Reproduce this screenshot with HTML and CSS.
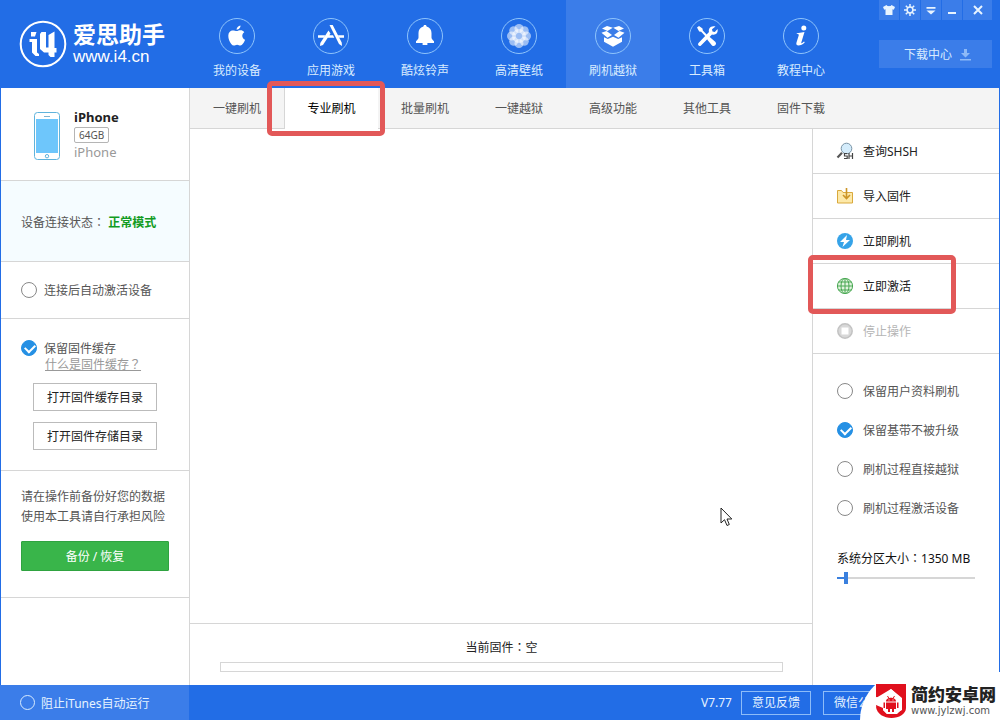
FILE: index.html
```html
<!DOCTYPE html>
<html lang="zh-CN">
<head>
<meta charset="utf-8">
<meta name="viewport" content="width=device-width, initial-scale=1">
<title>爱思助手</title>
<link rel="stylesheet" href="styles.css">
</head>
<body>
<div class="app">
  <header class="header">
    <div class="brand">
      <svg class="brand-mark" viewBox="0 0 48 48" aria-hidden="true">
        <circle cx="24" cy="24" r="22.3" fill="none" stroke="#fff" stroke-width="2"/>
        <path fill="#fff" d="M12 12h5.500l-1.500 4.500h-4zM10.500 19H18v13.500l2 1.500v2h-3.500L13 32.500V22h-2.500zM22.500 12H27v15.500h2.500V15l6-3.500V28h2v4.500h-2V37h-4l-2-2v-2.500H25L21 29V14z"/>
      </svg>
      <div class="brand-words">
        <span class="brand-name">爱思助手</span>
        <span class="brand-url">www.i4.cn</span>
      </div>
    </div>
    <nav class="nav">
      <a class="nav-item" href="#">
        <svg class="nav-icon" viewBox="0 0 36 36" aria-hidden="true"><circle class="ring" cx="18" cy="18" r="17.500"/><path d="M21.500 7.500c.2 2-1.700 4.300-3.900 4.200-.2-2 1.800-4 3.900-4.200zM25.300 14.300c-3 2-2.500 6.200.8 7.500-1 2.700-2.800 5.700-4.700 5.700-1.300 0-1.700-.8-3.300-.8s-2.100.8-3.300.8c-3.200 0-7.700-10-4.200-13.600 2.600-2.700 5.300-.8 7.200-.8 1.500 0 4.900-2.300 7.500 1.200z"/></svg>
        <span>我的设备</span>
      </a>
      <a class="nav-item" href="#">
        <svg class="nav-icon" viewBox="0 0 36 36" aria-hidden="true"><circle class="ring" cx="18" cy="18" r="17.500"/><path d="M16.500 7h3.200l9 17.500.3 3.500-3-2zM15.500 12.500l2 3-7.500 11.500-3 1 .3-3zM5 17.200h7.200l-1.500 2.600H5zM16 17.200h4l1.300 2.600h-7zM25 17.200h6v2.600h-4.600z"/><path class="cut" d="M16.700 11l1.500 3"/></svg>
        <span>应用游戏</span>
      </a>
      <a class="nav-item" href="#">
        <svg class="nav-icon" viewBox="0 0 36 36" aria-hidden="true"><circle class="ring" cx="18" cy="18" r="17.500"/><path d="M17 7h2l.6 1.600C23 9.500 24.500 12 24.500 15v4.500c0 1.200 1 2.500 2.500 3.700V25h-6.600v2h-4.800v-2H9v-1.800c1.500-1.200 2.500-2.500 2.500-3.700V15c0-3 1.500-5.500 4.900-6.400z"/></svg>
        <span>酷炫铃声</span>
      </a>
      <a class="nav-item" href="#">
        <svg class="nav-icon" viewBox="0 0 36 36" aria-hidden="true"><circle class="ring" cx="18" cy="18" r="17.500"/><g fill-opacity=".55"><circle cx="18" cy="10.500" r="4.500"/><circle cx="23.300" cy="12.700" r="4.500"/><circle cx="25.500" cy="18" r="4.500"/><circle cx="23.300" cy="23.300" r="4.500"/><circle cx="18" cy="25.500" r="4.500"/><circle cx="12.700" cy="23.300" r="4.500"/><circle cx="10.500" cy="18" r="4.500"/><circle cx="12.700" cy="12.700" r="4.500"/><circle cx="18" cy="18" r="7"/></g></svg>
        <span>高清壁纸</span>
      </a>
      <a class="nav-item nav-item--active" href="#" aria-current="page">
        <svg class="nav-icon" viewBox="0 0 36 36" aria-hidden="true"><circle class="ring" cx="18" cy="18" r="17.500"/><path d="M12 8l5.800 1.800L12.500 13 7 10.500zM24 8l-5.800 1.800 5.300 3.200 5.500-2.500zM6.500 14.800l5-1.800 5.500 4-4.500 2.700zM29.500 14.800l-5-1.800-5.500 4 4.500 2.700zM9 19.200l3.800 1.800L18 18.700l5.200 2.300L27 19.200v4.600l-9 5-9-5z"/></svg>
        <span>刷机越狱</span>
      </a>
      <a class="nav-item" href="#">
        <svg class="nav-icon" viewBox="0 0 36 36" aria-hidden="true"><circle class="ring" cx="18" cy="18" r="17.500"/><path d="M8 9.500L10 8l3.500 2.500.3 2 5.200 5.500 2 1.200L26.500 24a2.500 2.500 0 01-3.500 3.500L18.500 22l-1-2.500-5.300-5.700-2-.3z"/><path d="M26.500 8.500L23 11.200l.5 2.300 2.300.5 2.700-3c1 4-2 6.500-5.500 5.500L12 27.500c-1.500 1.500-4-.7-2.500-2.500L20 14c-1-3.500 2-7 6.500-5.500z"/></svg>
        <span>工具箱</span>
      </a>
      <a class="nav-item" href="#">
        <svg class="nav-icon" viewBox="0 0 36 36" aria-hidden="true"><circle class="ring" cx="18" cy="18" r="17.500"/><circle cx="20.800" cy="10" r="2.500"/><path d="M14 15.200l7.500-1.200-3.200 10.500c-.3 1.200.6 1.200 2.700-1l.8.700C18.500 28 12 29 13.500 24.500l2.200-7c.3-1.200-.2-1.400-2.200-1.400z"/></svg>
        <span>教程中心</span>
      </a>
    </nav>
    <div class="header-tools">
      <div class="window-buttons">
        <button type="button" aria-label="皮肤"><svg viewBox="0 0 12 12"><path d="M3.500 1C4.500 2.600 7.500 2.600 8.500 1L12 3l-1.200 2.800-1.300-.5V11h-7V5.300l-1.300.5L0 3z"/></svg></button>
        <button type="button" aria-label="设置"><svg viewBox="0 0 12 12"><circle class="line" cx="6" cy="6" r="2.900"/><path class="line" d="M6 0v3M6 9v3M0 6h3M9 6h3M1.800 1.800l2 2M8.200 8.200l2 2M10.200 1.800l-2 2M3.800 8.200l-2 2"/></svg></button>
        <button type="button" aria-label="菜单"><svg viewBox="0 0 12 12"><path d="M1.500 3h9v1.800h-9zM1.500 6.500h9L6 10.500z"/></svg></button>
        <button type="button" aria-label="最小化"><svg viewBox="0 0 12 12"><path d="M2 8h8v2H2z"/></svg></button>
        <button type="button" class="wide" aria-label="关闭"><svg viewBox="0 0 12 12"><path class="line thick" d="M2 2l8 8M10 2l-8 8"/></svg></button>
      </div>
      <button type="button" class="download">下载中心
        <svg viewBox="0 0 12 12" aria-hidden="true"><path d="M4 0h3v4h3L5.500 8.500 1 4h3zM0 10h11v1.500H0z"/></svg>
      </button>
    </div>
  </header>

  <div class="body">
    <aside class="sidebar">
      <section class="device">
        <svg class="phone" viewBox="0 0 26 48" aria-hidden="true">
          <rect x=".5" y=".5" width="25" height="47" rx="3" fill="#fff" stroke="#5fb3dc"/>
          <path fill="#6ec6fb" d="M2 7h22v34H2z"/>
          <path stroke="#7fb4d0" d="M10 4.500h6"/>
          <circle cx="13" cy="44.200" r="1.700" fill="none" stroke="#5fb3dc"/>
        </svg>
        <div class="device-info">
          <strong>iPhone</strong>
          <span class="capacity">64GB</span>
          <span class="model">iPhone</span>
        </div>
      </section>
      <section class="status">设备连接状态<span class="punct" lang="zh-TW">：</span> <b>正常模式</b></section>
      <section class="auto">
        <label class="check"><input type="checkbox"><span>连接后自动激活设备</span></label>
      </section>
      <section class="cache">
        <label class="check"><input type="checkbox" checked><span>保留固件缓存</span></label>
        <a class="help" href="#">什么是固件缓存<span class="punct" lang="zh-TW">？</span></a>
        <button type="button" class="outline">打开固件缓存目录</button>
        <button type="button" class="outline">打开固件存储目录</button>
      </section>
      <section class="backup">
        <p>请在操作前备份好您的数据<br>使用本工具请自行承担风险</p>
        <button type="button" class="primary">备份 / 恢复</button>
      </section>
    </aside>

    <main class="main">
      <nav class="tabs">
        <a class="tab" href="#">一键刷机</a>
        <a class="tab tab--active" href="#" aria-current="page">专业刷机<i class="callout callout--tab"></i></a>
        <a class="tab" href="#">批量刷机</a>
        <a class="tab" href="#">一键越狱</a>
        <a class="tab" href="#">高级功能</a>
        <a class="tab" href="#">其他工具</a>
        <a class="tab" href="#">固件下载</a>
      </nav>
      <div class="workspace">
        <div class="stage">
          <div class="canvas">
            <svg class="pointer" viewBox="0 0 13 20" aria-hidden="true"><path d="M1 1v15l3.500-3.300L7 18.500l2.300-1L7 12h4.800z" fill="#fff" stroke="#222"/></svg>
          </div>
          <div class="firmware">
            <label for="progress">当前固件<span class="punct" lang="zh-TW">：</span>空</label>
            <progress id="progress" value="0" max="100"></progress>
          </div>
        </div>
        <aside class="panel">
          <button type="button" class="action">
            <svg viewBox="0 0 18 18" aria-hidden="true"><path d="M1.500 15.500L6 10.800" stroke="#555" stroke-width="2.200"/><circle cx="10.500" cy="6.500" r="5.300" fill="#d4ecfb" stroke="#7893a5"/><path d="M11.200 11.500H8.500v2.500h2.700v2.500H8M13 11v6M16.500 11v6M13 14h3.500" fill="none" stroke="#444" stroke-width="1.200"/></svg>
            <span>查询SHSH</span></button>
          <button type="button" class="action">
            <svg viewBox="0 0 18 18" aria-hidden="true"><path d="M1.500 3.500h4l1.500 2h9.500v10.500h-15z" fill="#fde9a9" stroke="#d9a93c"/><path d="M10.500 1v10M7 8l3.500 3.500L14 8" fill="none" stroke="#cc9526" stroke-width="1.600"/></svg>
            <span>导入固件</span></button>
          <button type="button" class="action">
            <svg viewBox="0 0 18 18" aria-hidden="true"><circle cx="9" cy="9" r="8" fill="#36a3e8"/><path d="M11 3L4 10h4l-1.500 5L14 8h-4z" fill="#fff"/></svg>
            <span>立即刷机</span></button>
          <button type="button" class="action">
            <svg viewBox="0 0 18 18" aria-hidden="true"><g fill="#e2f4df" stroke="#48a852"><circle cx="9" cy="9" r="7.600"/><ellipse cx="9" cy="9" rx="4" ry="7.600"/><path d="M9 1.400v15.200M1.400 9h15.200M2.500 5h13M2.500 13h13"/></g></svg>
            <span>立即激活</span><i class="callout callout--action"></i></button>
          <button type="button" class="action" disabled>
            <svg viewBox="0 0 18 18" aria-hidden="true"><circle cx="9" cy="9" r="7.200" fill="#d8d8d8" stroke="#c2c2c2" stroke-width="1.500"/><path fill="#fff" d="M5.500 5.500h7v7h-7z"/></svg>
            <span>停止操作</span></button>
          <div class="options">
            <label class="check"><input type="checkbox"><span>保留用户资料刷机</span></label>
            <label class="check"><input type="checkbox" checked><span>保留基带不被升级</span></label>
            <label class="check"><input type="checkbox"><span>刷机过程直接越狱</span></label>
            <label class="check"><input type="checkbox"><span>刷机过程激活设备</span></label>
          </div>
          <div class="partition">
            <label for="size">系统分区大小<span class="punct" lang="zh-TW">：</span>1350 MB</label>
            <input id="size" type="range" min="0" max="100" value="5">
          </div>
        </aside>
      </div>
    </main>
  </div>

  <footer class="footer">
    <div class="footer-left">
      <label class="check check--light"><input type="checkbox"><span>阻止iTunes自动运行</span></label>
    </div>
    <div class="footer-right">
      <span>V7.77</span>
      <button type="button">意见反馈</button>
      <button type="button">微信公众号</button>
    </div>
  </footer>

  <div class="badge">
    <svg viewBox="0 0 30 34" aria-hidden="true">
      <path fill="#e0101d" d="M0 0h30v24c0 6-7 10-14.500 10C8 34 1 30 0 23l7 3 4 4h8l7-4V14L15 5 5 14l-5-1z"/>
      <path fill="#fff" d="M15 5l11 10v10l-5 5H11l-4-4V19l-7-5z"/>
      <path fill="#e0101d" d="M0 21l7 3v5C3 27 0 25 0 21z"/>
      <path fill="#e0101d" d="M10 17.500c0-5 10-5 10 0zM10 18.500h10V25h-2v3h-2v-3h-2v3h-2v-3h-2zM7.500 18.500H9V24H7.500zM21 18.500h1.500V24H21z"/>
      <path stroke="#e0101d" d="M11.500 12l1.500 2.500M18.500 12L17 14.500"/>
      <path fill="#fff" d="M12.500 15.500h1v1h-1zM16.500 15.500h1v1h-1z"/>
    </svg>
    <div class="badge-words">
      <span class="badge-name">简约安卓网</span>
      <span class="badge-url">www.jylzwj.com</span>
    </div>
  </div>
</div>
</body>
</html>
```
FILE: styles.css
```css
:root {
  --blue: #226de6;
  --blue-light: #3b7de9;
  --line: #d6d6d6;
  --text: #555;
  --red: #e25858;
}

* { box-sizing: border-box; }

body {
  margin: 0;
  font: 12px/18px "Noto Sans", "Noto Sans CJK SC", sans-serif;
  color: var(--text);
  background: #fff;
}

a { color: inherit; text-decoration: none; }

button {
  margin: 0;
  padding: 0;
  border: 0;
  background: none;
  font: inherit;
  color: inherit;
  cursor: pointer;
}

/* Centred full-width punctuation */
.punct { font-family: "Noto Sans CJK TC", sans-serif; line-height: 12px; }

.app {
  position: relative;
  display: flex;
  flex-direction: column;
  min-height: 100vh;
}

/* Header */
.header {
  display: flex;
  min-height: 88px;
  background: var(--blue);
  color: #d9ecff;
}

.brand {
  display: flex;
  flex: none;
  align-items: center;
  gap: 6px;
  width: 190px;
  padding-left: 19px;
}

.brand-mark { width: 48px; height: 48px; }
.brand-words { display: flex; flex-direction: column; color: #fff; }
.brand-name { font-size: 23px; line-height: 26px; font-weight: 700; }
.brand-url { font: 17px/20px "Liberation Sans", sans-serif; }

.nav { display: flex; flex: 1; }

.nav-item {
  display: flex;
  flex-direction: column;
  align-items: center;
  gap: 8px;
  width: 94px;
  padding-top: 18px;
}

.nav-item--active { background: var(--blue-light); }
.nav-icon { width: 36px; height: 36px; fill: #fff; }
.ring { fill: none; stroke: #8fc4fb; }
.cut { stroke: var(--blue); }

.header-tools {
  display: flex;
  flex-direction: column;
  gap: 20px;
  width: 113px;
  margin-right: 8px;
}

.window-buttons { display: flex; gap: 1px; height: 20px; }

.window-buttons button {
  display: flex;
  flex: 1;
  align-items: center;
  justify-content: center;
  background: var(--blue-light);
}

.window-buttons .wide { flex: none; width: 29px; }
.window-buttons svg { width: 12px; height: 12px; fill: #e8f4ff; }
.line { fill: none; stroke: #e8f4ff; stroke-width: 1.5; }
.thick { stroke-width: 2; }

.download {
  display: flex;
  align-items: center;
  justify-content: center;
  gap: 8px;
  height: 28px;
  padding: 2px 0 0 5px;
  background: var(--blue-light);
}

.download svg { width: 12px; height: 12px; fill: #8db9f7; }

/* Body */
.body {
  display: flex;
  flex: 1;
  border: solid var(--blue);
  border-width: 0 1px;
}

.sidebar {
  flex: none;
  width: 189px;
  border-right: 1px solid var(--line);
}

.sidebar section { border-bottom: 1px solid var(--line); }

.device {
  display: flex;
  gap: 14px;
  padding: 20px 0 18px 33px;
}

.phone { width: 26px; height: 50px; margin-top: 3px; }
.device-info { display: flex; flex-direction: column; align-items: flex-start; }
.device-info strong { font-size: 13px; line-height: 19px; color: #222; }

.capacity {
  padding: 0 4px;
  border: 1px solid #b5b5b5;
  border-radius: 2px;
  font-size: 10px;
  line-height: 14px;
}

.model { font-size: 13px; line-height: 19px; color: #999; }

.status { padding: 33px 0 29px 20px; background: #f5fcff; }
.status b { color: #119b22; }

.check { display: flex; align-items: center; gap: 7px; }

.check input {
  position: relative;
  flex: none;
  appearance: none;
  width: 16px;
  height: 16px;
  margin: 0;
  border: 1px solid #888;
  border-radius: 50%;
  background: #fff;
}

.check input:checked { border-color: #2590e4; background: #2590e4; }

.check input:checked::after {
  content: "";
  position: absolute;
  left: 3px;
  top: 3px;
  width: 8px;
  height: 5px;
  border: solid #fff;
  border-width: 0 0 2px 2px;
  transform: rotate(-45deg);
}

.check span { padding-top: 1px; line-height: 17px; }

.auto { padding: 19px 0 19px 20px; }

.cache {
  display: flex;
  flex-direction: column;
  align-items: flex-start;
  padding: 20px 0 20px 20px;
}

.help {
  margin: 0 0 10px 24px;
  line-height: 16px;
  color: #999;
  text-decoration: underline;
}

.outline {
  width: 124px;
  height: 28px;
  margin-left: 12px;
  padding-top: 1px;
  border: 1px solid #bbb;
  color: #222;
}

.outline + .outline { margin-top: 11px; }

.backup { padding: 16px 20px 26px; }
.backup p { margin: 0 0 14px; line-height: 20px; white-space: nowrap; }

.primary {
  width: 100%;
  height: 30px;
  padding-top: 2px;
  border: 1px solid #2fa340;
  border-radius: 1px;
  background: #39b54a;
  color: #fff;
}

/* Main column */
.main { display: flex; flex: 1; flex-direction: column; min-width: 0; }

.tabs {
  display: flex;
  height: 41px;
  border-bottom: 1px solid var(--line);
  background: #f4f4f4;
}

.tab {
  position: relative;
  width: 94px;
  line-height: 42px;
  text-align: center;
}

.tab--active {
  height: 41px;
  border-left: 1px solid var(--line);
  background: #fff;
  color: #000;
}

.callout {
  position: absolute;
  z-index: 1;
  border: 5px solid var(--red);
  border-radius: 5px;
  pointer-events: none;
}

.callout--tab { inset: -7px -7px -7px -18px; }
.callout--action { inset: -9px 43px -6px -5px; }

.workspace { display: flex; flex: 1; }
.stage { display: flex; flex: 1; flex-direction: column; }
.canvas { position: relative; flex: 1; }

.pointer {
  position: absolute;
  left: 530px;
  top: 378px;
  width: 13px;
  height: 20px;
}

.firmware {
  display: flex;
  flex-direction: column;
  align-items: center;
  gap: 5px;
  padding: 15px 29px 13px 30px;
  border-top: 1px solid var(--line);
  color: #222;
}

.firmware progress {
  appearance: none;
  width: 100%;
  height: 10px;
  border: 1px solid var(--line);
  background: #fff;
}

.firmware progress::-webkit-progress-bar { background: #fff; }

/* Right panel */
.panel { flex: none; width: 187px; border-left: 1px solid var(--line); }

.action {
  position: relative;
  display: flex;
  align-items: center;
  gap: 9px;
  width: 100%;
  height: 45px;
  padding-left: 23px;
  border-bottom: 1px solid var(--line);
  color: #222;
}

.action svg { width: 18px; height: 18px; }
.action span { padding-top: 2px; }
.action:disabled { color: #b5b5b5; }

.options {
  display: flex;
  flex-direction: column;
  gap: 21px;
  padding: 28px 0 33px 24px;
}

.options .check { gap: 10px; }

.partition {
  display: flex;
  flex-direction: column;
  gap: 4px;
  padding: 0 24px;
  color: #111;
  white-space: nowrap;
}

.partition input {
  appearance: none;
  width: 100%;
  height: 12px;
  margin: 0;
  background: linear-gradient(90deg, #3a80de 6%, #d6d6d6 6%) center / 100% 2px no-repeat;
}

.partition input::-webkit-slider-thumb {
  appearance: none;
  width: 4px;
  height: 12px;
  background: #3a80de;
}

/* Footer */
.footer {
  display: flex;
  height: 35px;
  background: var(--blue);
  color: #e6f3ff;
}

.footer-left {
  display: flex;
  align-items: center;
  width: 189px;
  padding-left: 20px;
  background: var(--blue-light);
}

.check--light { gap: 6px; }
.check--light input { width: 15px; height: 15px; border-color: #d9ecff; background: none; }

.footer-right {
  display: flex;
  flex: 1;
  align-items: center;
  justify-content: flex-end;
  gap: 12px;
  padding-right: 95px;
}

.footer-right span { margin-right: -3px; }
.footer-right button { height: 24px; padding: 0 10px; border: 1px solid #8dbcf8; }

/* Corner badge */
.badge {
  position: absolute;
  right: 0;
  bottom: 0;
  display: flex;
  align-items: center;
  gap: 5px;
  height: 48px;
  padding: 9px 4px 0 16px;
  border-top-left-radius: 48px;
  background: #fff;
}

.badge svg { width: 30px; height: 34px; }
.badge-words { display: flex; flex-direction: column; }
.badge-name { font-size: 17px; line-height: 20px; font-weight: 900; color: #222; }
.badge-url { font: 10px/12px "DejaVu Sans", sans-serif; color: #555; }
```
